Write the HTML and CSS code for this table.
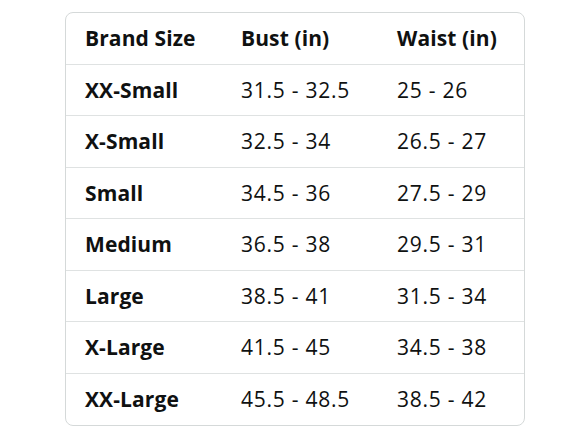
FILE: index.html
```html
<!DOCTYPE html>
<html>
<head>
<meta charset="utf-8">
<link rel="stylesheet" href="styles.css">
</head>
<body>
<div class="table">
  <div class="cell head">Brand Size</div><div class="cell head">Bust (in)</div><div class="cell head">Waist (in)</div>
  <div class="cell head">XX-Small</div><div class="cell">31.5 - 32.5</div><div class="cell">25 - 26</div>
  <div class="cell head">X-Small</div><div class="cell">32.5 - 34</div><div class="cell">26.5 - 27</div>
  <div class="cell head">Small</div><div class="cell">34.5 - 36</div><div class="cell">27.5 - 29</div>
  <div class="cell head">Medium</div><div class="cell">36.5 - 38</div><div class="cell">29.5 - 31</div>
  <div class="cell head">Large</div><div class="cell">38.5 - 41</div><div class="cell">31.5 - 34</div>
  <div class="cell head">X-Large</div><div class="cell">41.5 - 45</div><div class="cell">34.5 - 38</div>
  <div class="cell head last">XX-Large</div><div class="cell last">45.5 - 48.5</div><div class="cell last">38.5 - 42</div>
</div>
</body>
</html>
```
FILE: styles.css
```css
html, body { margin: 0; padding: 0; background: #fff; }
body { padding: 12px 0 0 65px; font-family: "Open Sans", "Noto Sans", sans-serif; color: #0f1111; }
.table {
  width: 460px;
  box-sizing: border-box;
  border: 1px solid #d5d9d9;
  border-radius: 8px;
  display: grid;
  grid-template-columns: 156px 156px 146px;
  grid-auto-rows: 51.5px;
  overflow: hidden;
}
.cell {
  display: flex;
  align-items: center;
  padding-left: 19px;
  font-size: 21px;
  letter-spacing: 0.75px;
  border-bottom: 1px solid #dfe2e2;
  box-sizing: border-box;
}
.cell.last { border-bottom: none; }
.head { font-weight: 700; letter-spacing: 0.1px; }
```
